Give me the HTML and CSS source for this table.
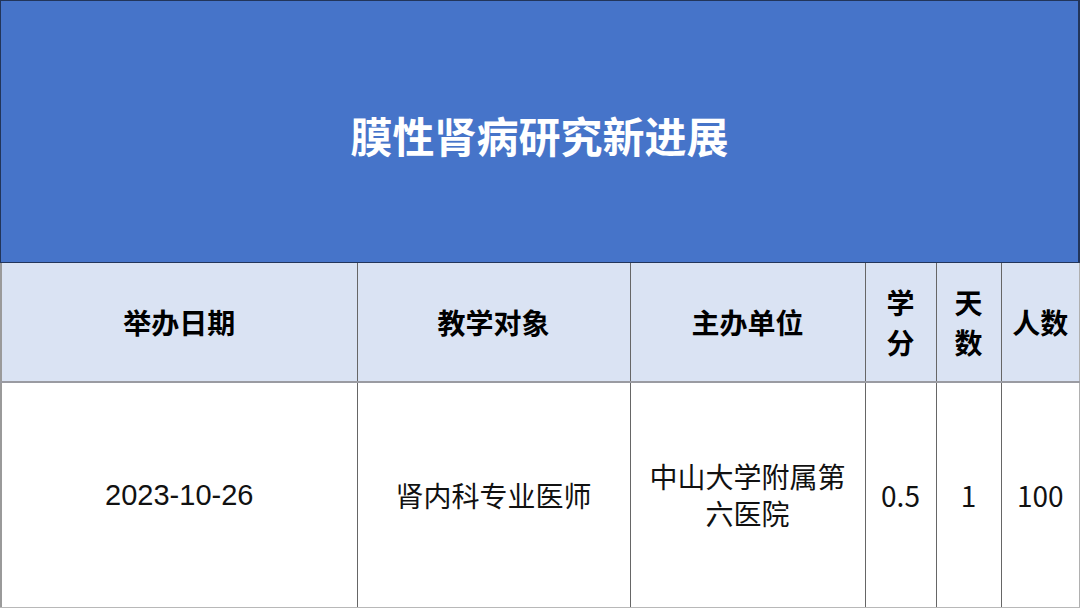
FILE: index.html
```html
<!DOCTYPE html>
<html lang="zh">
<head>
<meta charset="utf-8">
<link rel="stylesheet" href="styles.css">
</head>
<body>
<div class="page">
  <header class="banner"><h1 class="title">膜性肾病研究新进展</h1></header>
  <table class="info">
    <colgroup>
      <col class="c1"><col class="c2"><col class="c3"><col class="c4"><col class="c5"><col class="c6">
    </colgroup>
    <thead>
      <tr class="head-row">
        <th>举办日期</th>
        <th>教学对象</th>
        <th>主办单位</th>
        <th>学<br>分</th>
        <th>天<br>数</th>
        <th>人数</th>
      </tr>
    </thead>
    <tbody>
      <tr class="body-row">
        <td class="date">2023-10-26</td>
        <td>肾内科专业医师</td>
        <td>中山大学附属第<br>六医院</td>
        <td>0.5</td>
        <td>1</td>
        <td>100</td>
      </tr>
    </tbody>
  </table>
</div>
</body>
</html>
```
FILE: styles.css
```css
html, body {
  margin: 0;
  padding: 0;
  background: #ffffff;
}
.page {
  width: 1080px;
  height: 608px;
  overflow: hidden;
  font-family: "Noto Sans CJK SC", "Noto Sans", sans-serif;
  color: #000;
}
.banner {
  box-sizing: border-box;
  height: 263px;
  background: #4674c9;
  border: 1px solid #22355a;
  border-right-width: 2px;
  display: flex;
  align-items: center;
  justify-content: center;
  padding-top: 8px;
}
.title {
  margin: 0;
  color: #ffffff;
  font-size: 42px;
  font-weight: 700;
  line-height: 1.2;
}
.info {
  width: 1079px;
  height: 345px;
  border-collapse: collapse;
  table-layout: fixed;
}
.c1 { width: 356px; }
.c2 { width: 273px; }
.c3 { width: 235px; }
.c4 { width: 71px; }
.c5 { width: 65px; }
.c6 { width: 79px; }
.info th, .info td {
  border: 1px solid #666666;
  text-align: center;
  vertical-align: middle;
  padding: 0;
  font-size: 28px;
}
.info thead th {
  border-top: none;
  border-bottom-color: #9a9ba2;
  border-bottom-width: 2px;
}
.info th:first-child, .info td:first-child {
  border-left: 2px solid #9a9a9a;
}
.info th:last-child, .info td:last-child {
  border-right: 2px solid #b0b0b0;
}
.info tbody td {
  border-bottom: 2px solid #b8b8b8;
}
.head-row {
  height: 119px;
  background: #dae3f3;
}
.head-row th {
  font-weight: 700;
  line-height: 40px;
}
.body-row {
  height: 226px;
}
.body-row td {
  font-weight: 400;
  line-height: 37px;
  color: #111;
}
.body-row td.date {
  font-family: "Liberation Sans", Arial, sans-serif;
  font-size: 29px;
}
```
